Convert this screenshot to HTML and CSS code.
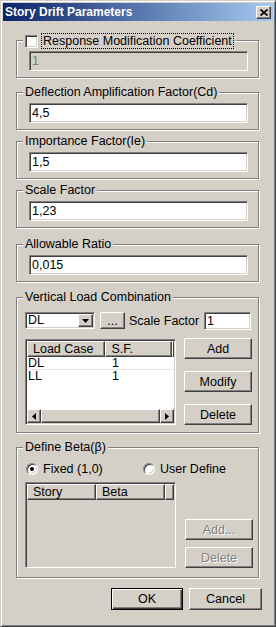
FILE: index.html
```html
<!DOCTYPE html>
<html lang="en">
<head>
  <meta charset="UTF-8">
  <title>Story Drift Parameters</title>
  <link rel="stylesheet" href="styles.css">
</head>
<body>

  <div class="window">
    <div class="titlebar">
      <span class="title">Story Drift Parameters</span>
      <span class="close-btn">
        <svg width="8" height="7" viewBox="0 0 8 7"><path d="M0.5 0.5 L7.5 6.5 M7.5 0.5 L0.5 6.5" stroke="#000" stroke-width="1.7" fill="none"/></svg>
      </span>
    </div>

    <div class="content">

      <div class="group group-first">
        <div class="group-title check-title">
          <span class="checkbox"></span>
          <span class="focus-label">Response Modification Coefficient</span>
        </div>
        <input class="field field-disabled" type="text" value="1" disabled>
      </div>

      <div class="group group-cd">
        <div class="group-title">Deflection Amplification Factor(Cd)</div>
        <input class="field" type="text" value="4,5">
      </div>

      <div class="group group-ie">
        <div class="group-title">Importance Factor(Ie)</div>
        <input class="field" type="text" value="1,5">
      </div>

      <div class="group group-sf">
        <div class="group-title">Scale Factor</div>
        <input class="field" type="text" value="1,23">
      </div>

      <div class="group group-ratio">
        <div class="group-title">Allowable Ratio</div>
        <input class="field" type="text" value="0,015">
      </div>

      <div class="group group-vlc">
        <div class="group-title">Vertical Load Combination</div>
        <div class="combo-row">
          <div class="combo">
            <span class="combo-text">DL</span>
            <span class="combo-btn">
              <svg width="7" height="4" viewBox="0 0 7 4"><path d="M0 0 H7 L3.5 4 Z" fill="#000"/></svg>
            </span>
          </div>
          <button class="btn btn-more">...</button>
          <span class="sf-label">Scale Factor</span>
          <input class="field field-small" type="text" value="1">
        </div>
        <div class="list-row">
          <div class="listview">
            <div class="lv-header">
              <span class="lv-col col-case">Load Case</span>
              <span class="lv-col col-sf">S.F.</span>
              <span class="lv-col col-stub"></span>
            </div>
            <div class="lv-body">
              <div class="lv-row row-first"><span class="cell col-case">DL</span><span class="cell col-sf">1</span></div>
              <div class="lv-row"><span class="cell col-case">LL</span><span class="cell col-sf">1</span></div>
            </div>
            <div class="hscroll">
              <span class="sb-btn">
                <svg width="4" height="7" viewBox="0 0 4 7"><path d="M4 0 V7 L0 3.5 Z" fill="#000"/></svg>
              </span>
              <span class="sb-thumb"></span>
              <span class="sb-btn">
                <svg width="4" height="7" viewBox="0 0 4 7"><path d="M0 0 V7 L4 3.5 Z" fill="#000"/></svg>
              </span>
            </div>
          </div>
          <div class="side-buttons">
            <button class="btn btn-side">Add</button>
            <button class="btn btn-side">Modify</button>
            <button class="btn btn-side">Delete</button>
          </div>
        </div>
      </div>

      <div class="group group-beta">
        <div class="group-title">Define Beta(β)</div>
        <div class="radio-row">
          <label class="radio-opt opt-fixed"><span class="radio checked"><span class="dot"></span></span>Fixed (1,0)</label>
          <label class="radio-opt"><span class="radio"></span>User Define</label>
        </div>
        <div class="list-row list-row-beta">
          <div class="listview listview-disabled">
            <div class="lv-header">
              <span class="lv-col col-story">Story</span>
              <span class="lv-col col-beta">Beta</span>
              <span class="lv-col col-stub"></span>
            </div>
            <div class="lv-body"></div>
          </div>
          <div class="side-buttons side-buttons-end">
            <button class="btn btn-side" disabled>Add...</button>
            <button class="btn btn-side" disabled>Delete</button>
          </div>
        </div>
      </div>

      <div class="dialog-buttons">
        <button class="btn btn-ok">OK</button>
        <button class="btn btn-cancel">Cancel</button>
      </div>

    </div>
  </div>

</body>
</html>
```

FILE: styles.css
```css
* {
  box-sizing: border-box;
}

body {
  margin: 0;
  background: #d4d0c8;
  font-family: "Liberation Sans", Arial, sans-serif;
  font-size: 12.5px;
  color: #000;
}

.window {
  width: 276px;
  height: 627px;
  background: #d4d0c8;
  border: 1px solid;
  border-color: #d4d0c8 #404040 #404040 #d4d0c8;
  box-shadow: inset 1px 1px #fff, inset -1px -1px #808080;
  padding: 2px;
}

.titlebar {
  height: 18px;
  display: flex;
  align-items: center;
  padding: 0 2px;
  background: linear-gradient(to right, #0a246a, #a6caf0);
}

.title {
  color: #fff;
  font-weight: bold;
  font-size: 12px;
  line-height: 18px;
}

.close-btn {
  margin-left: auto;
  width: 15px;
  height: 13px;
  display: flex;
  align-items: center;
  justify-content: center;
  background: #d4d0c8;
  border: 1px solid;
  border-color: #fff #404040 #404040 #fff;
  box-shadow: inset -1px -1px #808080;
}

.content {
  padding-left: 13px;
}

/* group boxes */
.group {
  width: 243px;
  border: 1px solid #808080;
  box-shadow: inset 1px 1px #fff, 1px 1px #fff;
  padding-bottom: 6px;
}

.group-first { margin-top: 19px; }
.group-cd { margin-top: 14px; }
.group-ie { margin-top: 11px; }
.group-sf { margin-top: 11px; }
.group-ratio { margin-top: 16px; }
.group-vlc { margin-top: 15px; padding-bottom: 7px; }
.group-beta { margin-top: 14px; padding-bottom: 9px; }

.group-title {
  width: fit-content;
  height: 14px;
  line-height: 14px;
  margin: -8px 0 0 6px;
  padding: 0 2px;
  background: #d4d0c8;
  white-space: nowrap;
}

.check-title {
  display: flex;
  align-items: center;
  gap: 3px;
  height: 16px;
}

.checkbox {
  width: 13px;
  height: 13px;
  background: #fff;
  border: 1px solid;
  border-color: #808080 #fff #fff #808080;
  box-shadow: inset 1px 1px #404040, inset -1px -1px #d4d0c8;
}

.focus-label {
  border: 1px dotted #000;
  padding: 0 1px;
  line-height: 14px;
}

/* text fields */
.field {
  display: block;
  width: 219px;
  height: 20px;
  margin: 4px 0 0 12px;
  padding: 0 2px;
  border: 1px solid;
  border-color: #808080 #fff #fff #808080;
  box-shadow: inset 1px 1px #404040, inset -1px -1px #d4d0c8;
  background: #fff;
  font: inherit;
  color: #000;
  outline: none;
}

.group-first .field {
  margin-top: 2px;
}

.field-disabled {
  background: #d4d0c8;
  color: #808080;
}

/* buttons */
.btn {
  background: #d4d0c8;
  border: 1px solid;
  border-color: #fff #404040 #404040 #fff;
  box-shadow: inset -1px -1px #808080;
  font: inherit;
  color: #000;
  padding: 0;
}

.btn:disabled {
  color: #808080;
  text-shadow: 1px 1px #fff;
}

/* vertical load combination */
.combo-row {
  width: 226px;
  height: 18px;
  margin: 8px 0 0 8px;
  display: flex;
  align-items: flex-start;
}

.combo {
  width: 70px;
  height: 17px;
  display: flex;
  padding: 1px;
  background: #fff;
  border: 1px solid;
  border-color: #808080 #fff #fff #808080;
  box-shadow: inset 1px 1px #404040, inset -1px -1px #d4d0c8;
}

.combo-text {
  flex: 1;
  line-height: 13px;
  padding-left: 1px;
}

.combo-btn {
  width: 15px;
  height: 13px;
  display: flex;
  align-items: center;
  justify-content: center;
  background: #d4d0c8;
  border: 1px solid;
  border-color: #fff #404040 #404040 #fff;
  box-shadow: inset -1px -1px #808080;
}

.btn-more {
  width: 25px;
  height: 17px;
  margin-left: 5px;
  line-height: 12px;
}

.sf-label {
  margin-left: 4px;
  line-height: 18px;
}

.field-small {
  width: 47px;
  height: 18px;
  margin: 0 0 0 auto;
}

.list-row {
  display: flex;
  gap: 8px;
  margin: 9px 0 0 8px;
}

.listview {
  width: 151px;
  height: 86px;
  display: flex;
  flex-direction: column;
  padding: 1px;
  background: #fff;
  border: 1px solid;
  border-color: #808080 #fff #fff #808080;
  box-shadow: inset 1px 1px #404040, inset -1px -1px #d4d0c8;
}

.listview-disabled {
  background: #d4d0c8;
}

.lv-header {
  display: flex;
  height: 16px;
}

.lv-col {
  height: 16px;
  line-height: 14px;
  padding-left: 5px;
  background: #d4d0c8;
  border: 1px solid;
  border-color: #fff #404040 #404040 #fff;
  box-shadow: inset -1px -1px #808080;
  white-space: nowrap;
}

.col-case { width: 79px; }
.col-sf { width: 67px; }
.col-story { width: 69px; }
.col-beta { width: 69px; }
.col-stub { flex: 1; padding: 0; }

.lv-body {
  flex: 1;
}

.lv-row {
  display: flex;
  height: 13px;
  line-height: 13px;
}

.row-first {
  border-bottom: 1px solid #e4e2de;
}

.cell {
  padding-left: 1px;
}

.lv-row .col-sf {
  padding-left: 6px;
}

.hscroll {
  height: 14px;
  display: flex;
}

.sb-btn {
  width: 14px;
  display: flex;
  align-items: center;
  justify-content: center;
  background: #d4d0c8;
  border: 1px solid;
  border-color: #fff #404040 #404040 #fff;
  box-shadow: inset -1px -1px #808080;
}

.sb-thumb {
  flex: 1;
  background: #d4d0c8;
  border: 1px solid;
  border-color: #fff #404040 #404040 #fff;
  box-shadow: inset -1px -1px #808080;
}

.side-buttons {
  display: flex;
  flex-direction: column;
  gap: 12px;
  margin-top: -1px;
}

.btn-side {
  width: 68px;
  height: 21px;
}

/* define beta */
.radio-row {
  display: flex;
  align-items: center;
  height: 16px;
  margin: 7px 0 0 9px;
}

.radio-opt {
  display: flex;
  align-items: center;
  gap: 5px;
}

.opt-fixed {
  width: 117px;
}

.radio {
  width: 12px;
  height: 12px;
  border-radius: 50%;
  display: flex;
  align-items: center;
  justify-content: center;
  background: #fff;
  border: 1px solid;
  border-color: #808080 #fff #fff #808080;
  box-shadow: inset 1px 1px #404040, inset -1px -1px #d4d0c8;
}

.dot {
  width: 4px;
  height: 4px;
  border-radius: 50%;
  background: #000;
}

.list-row-beta {
  margin-top: 5px;
  gap: 9px;
}

.side-buttons-end {
  justify-content: flex-end;
  gap: 7px;
  margin-top: 0;
}

/* dialog buttons */
.dialog-buttons {
  width: 246px;
  margin-top: 10px;
  display: flex;
  justify-content: flex-end;
  gap: 6px;
}

.btn-ok {
  width: 72px;
  height: 22px;
  border: 1px solid #000;
  box-shadow: inset 1px 1px #fff, inset -1px -1px #404040, inset -2px -2px #808080;
}

.btn-cancel {
  width: 73px;
  height: 22px;
}
```
